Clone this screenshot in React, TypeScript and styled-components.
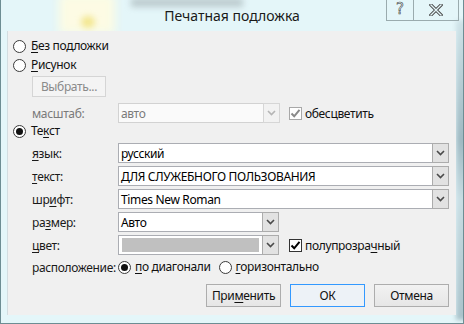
import React from "react";
import styled, { createGlobalStyle } from "styled-components";

const Global = createGlobalStyle`
  html, body { margin: 0; padding: 0; background: #e4f6f9; }
  body { font-family: "Noto Sans", "Segoe UI", sans-serif; font-size: 12px; letter-spacing: -0.35px; color: #111; }
  * { box-sizing: border-box; }
`;

const Window = styled.div`
  position: relative;
  width: 464px;
  height: 324px;
  background: #e4f6f9;
  border-left: 1px solid #6d8d93;
  border-right: 1px solid #6d8d93;
  border-bottom: 1px solid #6d8d93;
  overflow: hidden;
  display: flex;
  flex-direction: column;
`;

const Blur = styled.div<{ $x: number; $y: number; $w: number; $h: number; $c: string; $b: number; $r?: string }>`
  position: absolute;
  left: ${(p) => p.$x}px;
  top: ${(p) => p.$y}px;
  width: ${(p) => p.$w}px;
  height: ${(p) => p.$h}px;
  background: ${(p) => p.$c};
  filter: blur(${(p) => p.$b}px);
  border-radius: ${(p) => p.$r ?? "0"};
`;

const TitleBar = styled.div`
  position: relative;
  z-index: 1;
  height: 31px;
  display: grid;
  grid-template-columns: 1fr auto 1fr;
  align-items: start;
`;

const Title = styled.div`
  grid-column: 2;
  font-size: 14px;
  letter-spacing: 0;
  line-height: 31px;
  color: #1a1a1a;
`;

const Controls = styled.div`
  grid-column: 3;
  justify-self: end;
  display: flex;
  margin-right: 4px;
`;

const CtrlBtn = styled.div<{ $w: number }>`
  width: ${(p) => p.$w}px;
  height: 21px;
  border: 1px solid #9aabae;
  border-top: none;
  display: flex;
  align-items: center;
  justify-content: center;
  & + & { border-left: none; }
`;

const HelpGlyph = styled.span`
  font-family: "DejaVu Sans", sans-serif;
  font-size: 15px;
  letter-spacing: 0;
  line-height: 1;
  color: #e4f6f9;
  -webkit-text-stroke: 0.6px #444;
  margin-top: -1px;
`;

const Panel = styled.div`
  position: relative;
  z-index: 1;
  width: 449px;
  height: 284px;
  margin-left: 6px;
  background: #f0f0f0;
  border-left: 1px solid #d3dde0;
  padding: 7px 7px 0 5px;
  display: flex;
  flex-direction: column;
`;

const Row = styled.div<{ $mt?: number; $h?: number; $indent?: number }>`
  display: flex;
  align-items: center;
  height: ${(p) => p.$h ?? 20}px;
  margin-top: ${(p) => p.$mt ?? 0}px;
  padding-left: ${(p) => p.$indent ?? 0}px;
  white-space: nowrap;
`;

const RadioCircle = styled.span<{ $checked?: boolean }>`
  width: 13px;
  height: 13px;
  flex: none;
  border-radius: 50%;
  border: 1px solid #3a3a3a;
  background: #fff;
  display: inline-flex;
  align-items: center;
  justify-content: center;
  &::after {
    content: "";
    width: 7px;
    height: 7px;
    border-radius: 50%;
    background: #111;
    display: ${(p) => (p.$checked ? "block" : "none")};
  }
`;

const RadioLabel = styled.label<{ $gap?: number; $ml?: number }>`
  display: inline-flex;
  align-items: center;
  gap: ${(p) => p.$gap ?? 5}px;
  margin-left: ${(p) => p.$ml ?? 0}px;
  line-height: 16px;
`;

const Acc = styled.span`
  text-decoration: underline;
  text-underline-offset: 2px;
  text-decoration-thickness: 1px;
`;

const FieldLabel = styled.span<{ $disabled?: boolean }>`
  width: 105px;
  flex: none;
  padding-left: 19px;
  color: ${(p) => (p.$disabled ? "#7a7a7a" : "#1a1a1a")};
`;

const Combo = styled.div<{ $w: number; $disabled?: boolean }>`
  width: ${(p) => p.$w}px;
  height: 20px;
  flex: none;
  border: 1px solid ${(p) => (p.$disabled ? "#d2d2d2" : "#abadb3")};
  background: ${(p) => (p.$disabled ? "#fafafa" : "#fff")};
  display: flex;
  align-items: center;
`;

const ComboText = styled.span<{ $disabled?: boolean }>`
  flex: 1;
  padding-left: 2px;
  color: ${(p) => (p.$disabled ? "#7a7a7a" : "#000")};
  overflow: hidden;
`;

const Swatch = styled.span`
  flex: 1;
  height: 14px;
  margin: 0 3px 0 3px;
  background: #c0c0c0;
`;

const DropBtn = styled.span<{ $disabled?: boolean }>`
  width: 17px;
  height: 20px;
  flex: none;
  margin-right: -1px;
  border: 1px solid ${(p) => (p.$disabled ? "#d6d6d6" : "#acacac")};
  background: ${(p) => (p.$disabled ? "#f2f2f2" : "#e2e2e2")};
  display: flex;
  align-items: center;
  justify-content: center;
`;

const Check = styled.span<{ $disabled?: boolean }>`
  width: 13px;
  height: 13px;
  flex: none;
  border: 1px solid ${(p) => (p.$disabled ? "#a8a8a8" : "#333")};
  background: #fff;
  display: inline-flex;
  align-items: center;
  justify-content: center;
`;

const CheckLabel = styled.label<{ $ml: number }>`
  display: inline-flex;
  align-items: center;
  gap: 3px;
  margin-left: ${(p) => p.$ml}px;
`;

const SmallButton = styled.button`
  width: 74px;
  height: 21px;
  padding: 0;
  border: 1px solid #d5d5d5;
  background: #f4f4f4;
  color: #8a8a8a;
  font: inherit;
  font-size: 12px;
  letter-spacing: inherit;
`;

const ButtonBar = styled.div`
  display: flex;
  justify-content: flex-end;
  gap: 9px;
  margin-top: 9px;
`;

const DlgButton = styled.button<{ $default?: boolean }>`
  width: 75px;
  height: 23px;
  padding: 0;
  border: 1px solid ${(p) => (p.$default ? "#3399ff" : "#adadad")};
  background: ${(p) => (p.$default ? "#edf2f7" : "linear-gradient(#f2f2f2, #e6e6e6)")};
  color: #111;
  font: inherit;
  font-size: 12px;
  letter-spacing: inherit;
`;

const Chevron = ({ disabled }: { disabled?: boolean }) => (
  <svg width="9" height="6" viewBox="0 0 9 6">
    <path d="M1 1 L4.5 4.5 L8 1" fill="none" stroke={disabled ? "#b5b5b5" : "#4a4a4a"} strokeWidth="1.6" />
  </svg>
);

const Tick = ({ disabled }: { disabled?: boolean }) => (
  <svg width="11" height="11" viewBox="0 0 11 11">
    <path d="M1.5 5.5 L4.2 8.3 L9.5 1.8" fill="none" stroke={disabled ? "#8a8a8a" : "#000"} strokeWidth="2" />
  </svg>
);

const CloseIcon = () => (
  <svg width="14" height="12" viewBox="0 0 14 12">
    <path d="M2 1 L12 11 M12 1 L2 11" fill="none" stroke="#444" strokeWidth="3.2" strokeLinecap="square" />
    <path d="M2 1 L12 11 M12 1 L2 11" fill="none" stroke="#e4f6f9" strokeWidth="1.4" strokeLinecap="square" />
  </svg>
);

const ComboBox = ({ w, text, disabled, swatch }: { w: number; text?: string; disabled?: boolean; swatch?: boolean }) => (
  <Combo $w={w} $disabled={disabled}>
    {swatch ? <Swatch /> : <ComboText $disabled={disabled}>{text}</ComboText>}
    <DropBtn $disabled={disabled}>
      <Chevron disabled={disabled} />
    </DropBtn>
  </Combo>
);

export default function App() {
  return (
    <>
      <Global />
      <Window>
        <Blur $x={58} $y={-6} $w={56} $h={40} $c="rgba(255,252,225,0.9)" $b={5} />
        <Blur $x={80} $y={16} $w={14} $h={12} $c="rgba(240,225,120,0.8)" $b={3} $r="50%" />
        <Blur $x={130} $y={-2} $w={112} $h={9} $c="rgba(140,150,155,0.45)" $b={3} />
        <Blur $x={455} $y={20} $w={12} $h={300} $c="linear-gradient(#cfe3e8, #9fb9c2 40%, #c8dde3 60%, #a9c2ca)" $b={2} />
        <TitleBar>
          <Title>Печатная подложка</Title>
          <Controls>
            <CtrlBtn $w={28}>
              <HelpGlyph>?</HelpGlyph>
            </CtrlBtn>
            <CtrlBtn $w={45}>
              <CloseIcon />
            </CtrlBtn>
          </Controls>
        </TitleBar>
        <Panel>
          <Row $h={16}>
            <RadioLabel>
              <RadioCircle />
              <span>
                <Acc>Б</Acc>ез подложки
              </span>
            </RadioLabel>
          </Row>
          <Row $h={16} $mt={3}>
            <RadioLabel>
              <RadioCircle />
              <span>
                <Acc>Р</Acc>исунок
              </span>
            </RadioLabel>
          </Row>
          <Row $h={21} $mt={3} $indent={19}>
            <SmallButton disabled>Выбрать...</SmallButton>
          </Row>
          <Row $mt={6}>
            <FieldLabel $disabled>масштаб:</FieldLabel>
            <ComboBox w={162} text="авто" disabled />
            <CheckLabel $ml={9}>
              <Check $disabled>
                <Tick disabled />
              </Check>
              <span>обесцветить</span>
            </CheckLabel>
          </Row>
          <Row $h={16}>
            <RadioLabel>
              <RadioCircle $checked />
              <span>
                Те<Acc>к</Acc>ст
              </span>
            </RadioLabel>
          </Row>
          <Row $mt={4}>
            <FieldLabel>
              <Acc>я</Acc>зык:
            </FieldLabel>
            <ComboBox w={331} text="русский" />
          </Row>
          <Row $mt={3}>
            <FieldLabel>
              <Acc>т</Acc>екст:
            </FieldLabel>
            <ComboBox w={331} text="ДЛЯ СЛУЖЕБНОГО ПОЛЬЗОВАНИЯ" />
          </Row>
          <Row $mt={3}>
            <FieldLabel>
              шр<Acc>и</Acc>фт:
            </FieldLabel>
            <ComboBox w={331} text="Times New Roman" />
          </Row>
          <Row $mt={3}>
            <FieldLabel>
              ра<Acc>з</Acc>мер:
            </FieldLabel>
            <ComboBox w={161} text="Авто" />
          </Row>
          <Row $mt={3}>
            <FieldLabel>
              <Acc>ц</Acc>вет:
            </FieldLabel>
            <ComboBox w={161} swatch />
            <CheckLabel $ml={10}>
              <Check>
                <Tick />
              </Check>
              <span>
                полупрозра<Acc>ч</Acc>ный
              </span>
            </CheckLabel>
          </Row>
          <Row $h={16} $mt={4}>
            <FieldLabel>расположение:</FieldLabel>
            <RadioLabel $gap={4}>
              <RadioCircle $checked />
              <span>
                <Acc>п</Acc>о диагонали
              </span>
            </RadioLabel>
            <RadioLabel $gap={4} $ml={8}>
              <RadioCircle />
              <span>
                <Acc>г</Acc>оризонтально
              </span>
            </RadioLabel>
          </Row>
          <ButtonBar>
            <DlgButton>
              При<Acc>м</Acc>енить
            </DlgButton>
            <DlgButton $default>ОК</DlgButton>
            <DlgButton>Отмена</DlgButton>
          </ButtonBar>
        </Panel>
      </Window>
    </>
  );
}
